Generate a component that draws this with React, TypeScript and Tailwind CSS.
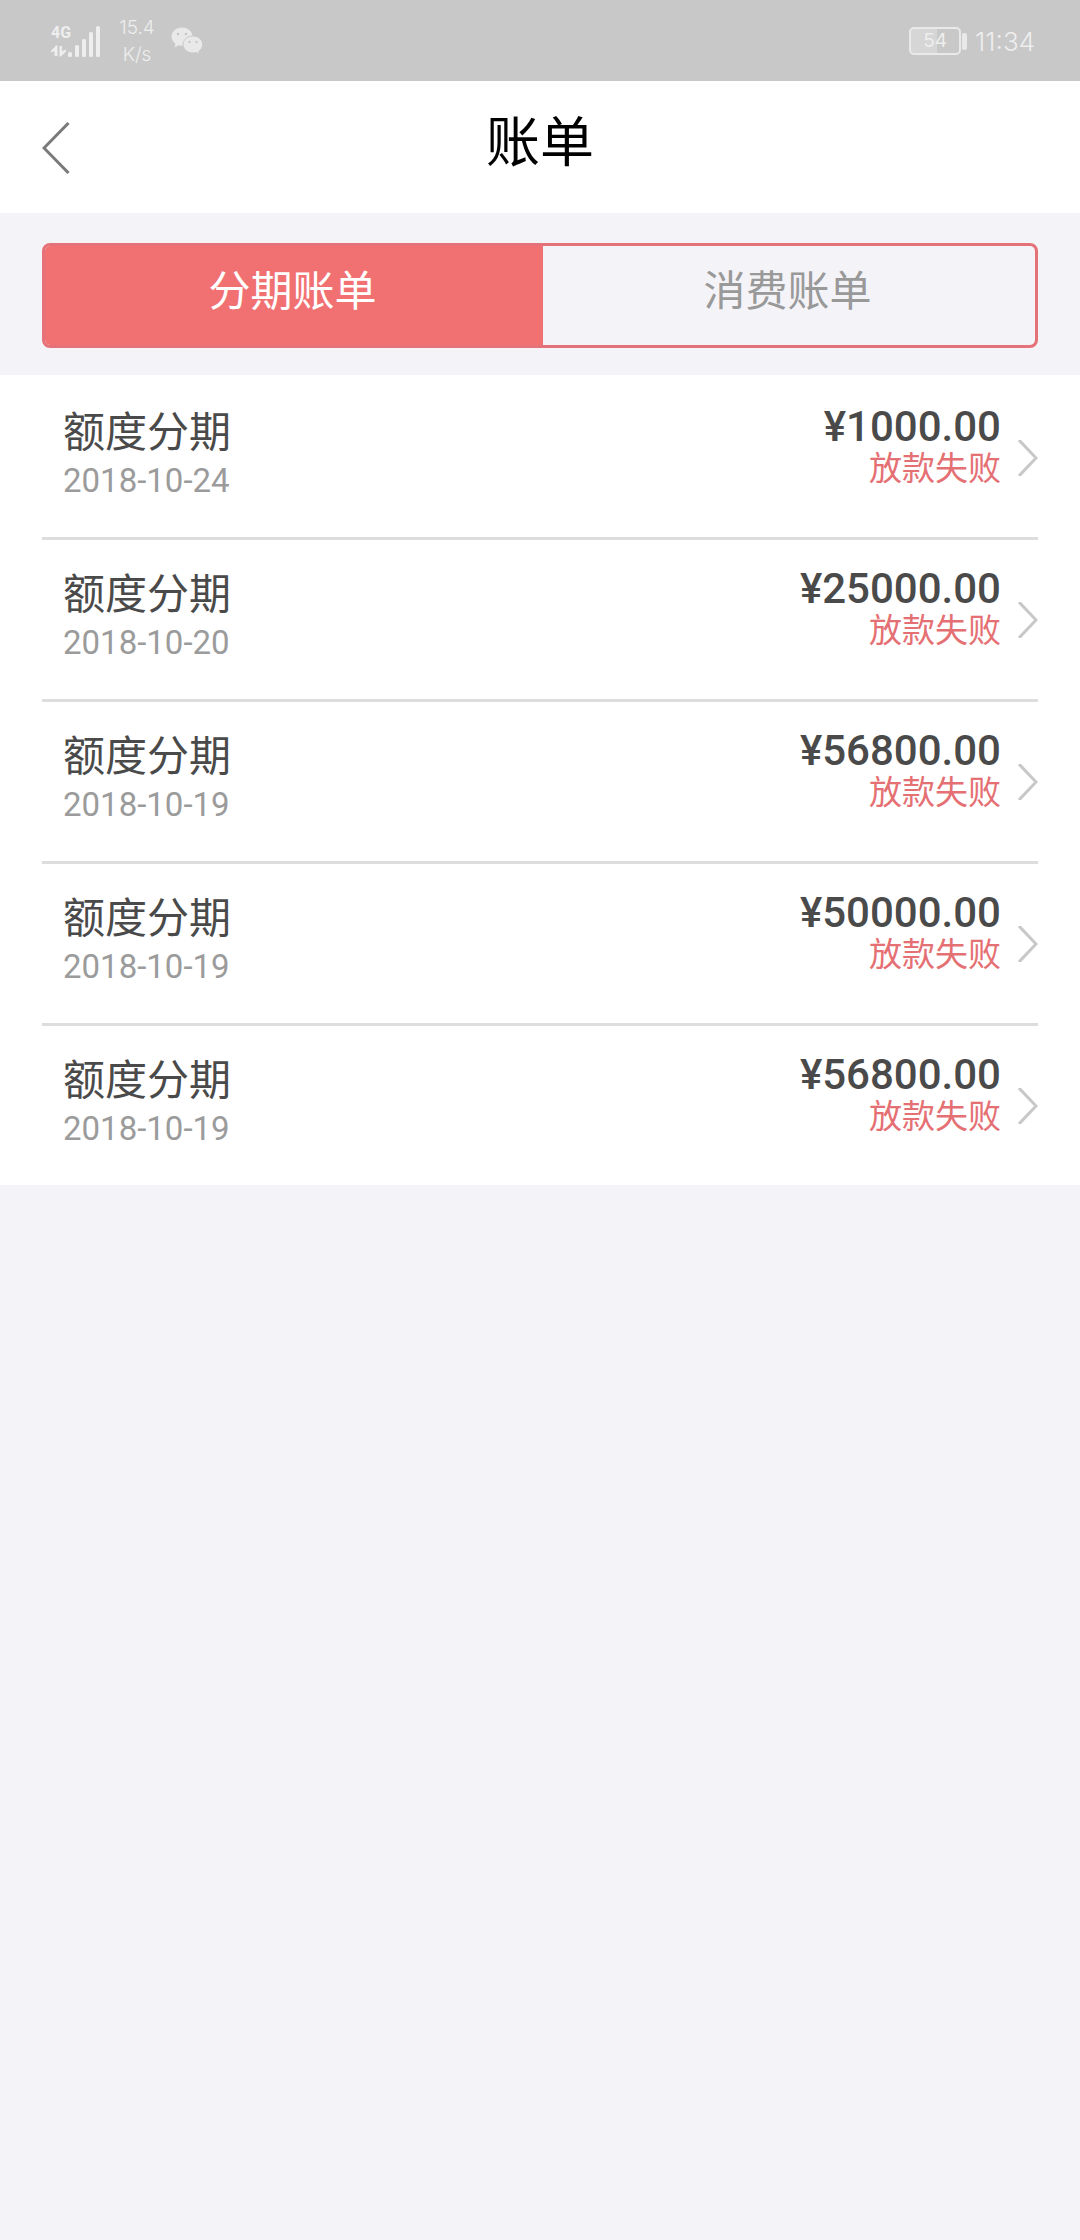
import React, { useState } from "react";

const bills = [
  { title: "额度分期", date: "2018-10-24", amount: "¥1000.00", status: "放款失败" },
  { title: "额度分期", date: "2018-10-20", amount: "¥25000.00", status: "放款失败" },
  { title: "额度分期", date: "2018-10-19", amount: "¥56800.00", status: "放款失败" },
  { title: "额度分期", date: "2018-10-19", amount: "¥50000.00", status: "放款失败" },
  { title: "额度分期", date: "2018-10-19", amount: "¥56800.00", status: "放款失败" },
];

const tabs = ["分期账单", "消费账单"];

function SignalIcon() {
  return (
    <svg width="50" height="12" viewBox="0 0 50 12" className="overflow-visible" fill="currentColor" aria-hidden="true">
      <path d="M0 6 L5 0.500 H6.500 V11 H3.500 V6 L0 7.500 Z" />
      <path d="M8.500 1 H11 V6 L15 4.500 V6.500 L10 11.500 H8.500 Z" />
      <rect x="17" y="7" width="4" height="5" rx="1.500" />
      <rect x="24" y="0" width="4" height="12" rx="1.500" />
      <rect x="31" y="-6" width="4" height="18" rx="1.500" />
      <rect x="38" y="-13" width="4" height="25" rx="1.500" />
      <rect x="45" y="-19" width="4" height="31" rx="1.500" />
    </svg>
  );
}

function WeChatIcon() {
  return (
    <svg width="32" height="28" viewBox="0 0 32 28" aria-hidden="true">
      <path
        fill="#e9e9e9"
        d="M11 0.500 C5 0.500 0.500 4.500 0.500 9.500 C0.500 12.500 2 15 4.500 16.700 L3.500 20.500 L7.500 18.300 C8.700 18.700 9.800 18.800 11 18.800 C17 18.800 21.500 14.800 21.500 9.500 C21.500 4.500 17 0.500 11 0.500 Z"
      />
      <path
        fill="#e9e9e9"
        stroke="#c8c8c8"
        strokeWidth="1"
        d="M22 9 C16.500 9 12 12.800 12 17.500 C12 22.300 16.500 26 22 26 C23.200 26 24.300 25.800 25.300 25.500 L28.600 27.300 L27.800 24.200 C30.200 22.700 31.700 20.300 31.700 17.500 C31.700 12.800 27.300 9 22 9 Z"
      />
      <g fill="#c8c8c8">
        <circle cx="7" cy="7" r="1.300" />
        <circle cx="15" cy="7" r="1.300" />
        <circle cx="18.500" cy="15" r="1.200" />
        <circle cx="25.500" cy="15" r="1.200" />
      </g>
    </svg>
  );
}

function StatusBar() {
  return (
    <div className="flex h-[81px] items-center justify-between bg-[#c8c8c8] pr-[45px] pl-[51px] font-['Inter',sans-serif] font-light text-[#eeeeee]">
      <div className="flex items-center">
        <div className="flex w-[50px] flex-col gap-1">
          <span className="font-['Roboto',sans-serif] text-[16px] leading-4 font-bold">4G</span>
          <SignalIcon />
        </div>
        <div className="ml-5 flex w-[32px] flex-col items-center text-[19px] leading-[27px]">
          <span className="whitespace-nowrap">15.4</span>
          <span className="whitespace-nowrap">K/s</span>
        </div>
        <div className="ml-[18px]">
          <WeChatIcon />
        </div>
      </div>
      <div className="flex items-center pt-px">
        <div className="flex h-7 w-[52px] items-center justify-center rounded-[5px] border-2 border-[#e9e9e9] bg-linear-to-r from-[#d6d6d6] from-54% to-transparent to-54% text-[19px] font-normal">
          54
        </div>
        <div className="ml-px h-[17px] w-[5px] rounded-[2px] bg-[#e9e9e9]" />
        <span className="ml-2 text-[26px]">11:34</span>
      </div>
    </div>
  );
}

export default function App() {
  const [active, setActive] = useState(0);
  return (
    <div className="min-h-screen bg-[#f4f3f8] font-['Roboto','Noto_Sans_CJK_SC',sans-serif]">
      <StatusBar />
      <header className="grid h-[132px] grid-cols-[1fr_auto_1fr] items-center bg-white px-[42px] pt-[2px]">
        <button type="button" aria-label="返回" className="justify-self-start">
          <svg width="28" height="52" viewBox="0 0 28 52" fill="none" stroke="#7a7a7a" strokeWidth="3" aria-hidden="true">
            <path d="M26.500 1 L2 26 L26.500 51" />
          </svg>
        </button>
        <h1 className="pb-2 text-[54px] leading-[60px] text-black">账单</h1>
      </header>

      <div className="px-[42px] pt-[30px] pb-[27px]">
        <div role="tablist" className="grid h-[105px] grid-cols-[498fr_492fr] overflow-hidden rounded-lg border-3 border-[#e57279]">
          {tabs.map((label, i) => (
            <button
              key={label}
              type="button"
              role="tab"
              aria-selected={active === i}
              onClick={() => setActive(i)}
              className={
                "pr-[3px] pb-2 text-[42px] leading-[48px] " +
                (active === i ? "bg-[#f17173] text-white" : "text-[#999999]")
              }
            >
              {label}
            </button>
          ))}
        </div>
      </div>

      <ul className="bg-white px-[42px]">
        {bills.map((bill, i) => (
          <li key={i} className="border-t-3 border-[#dddddd] first:border-transparent">
            <a href="#bill" className="flex h-[159px] items-center">
              <div className="flex flex-1 flex-col pb-2 pl-[21px]">
                <span className="text-[42px] leading-[54px] text-[#4a4a4a]">{bill.title}</span>
                <span className="text-[33px] leading-[42px] text-[#9b9b9b]">{bill.date}</span>
              </div>
              <div className="flex flex-col pb-5 text-right">
                <span className="text-[42px] leading-[42px] font-medium text-[#4a4a4a]">{bill.amount}</span>
                <span className="text-[33px] leading-[42px] text-[#e57073]">{bill.status}</span>
              </div>
              <svg className="ml-[17px]" width="20" height="36" viewBox="0 0 20 36" fill="none" stroke="#c8c8c8" strokeWidth="3" aria-hidden="true">
                <path d="M1 0 L18 18 L1 36" />
              </svg>
            </a>
          </li>
        ))}
      </ul>
    </div>
  );
}
